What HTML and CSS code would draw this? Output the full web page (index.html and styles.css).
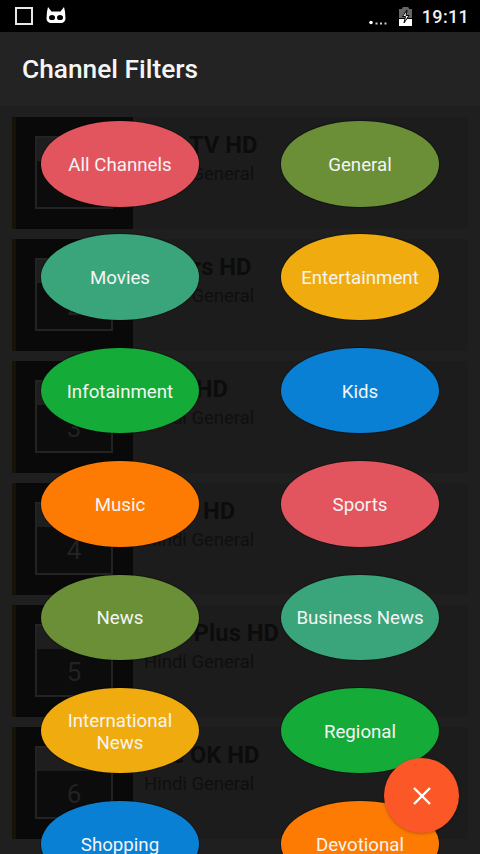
FILE: index.html
```html
<!DOCTYPE html>
<html lang="en">
<head>
<meta charset="utf-8">
<title>Channel Filters</title>
<link rel="stylesheet" href="styles.css">
</head>
<body>
<div class="screen">
  <header class="statusbar">
    <div class="status-left">
      <span class="square"></span>
      <svg class="mask" viewBox="0 0 20 17"><path d="M2 0l3.500 4.500h9L18 0l1 4.500 .500 7a4.500 4.500 0 0 1-4.500 4.500H5a4.500 4.500 0 0 1-4.500-4.500l.500-7z" fill="#fff"/><ellipse cx="6" cy="10.500" rx="3" ry="2.600" fill="#000"/><ellipse cx="14" cy="10.500" rx="3" ry="2.600" fill="#000"/></svg>
    </div>
    <div class="status-right">
      <svg class="signal" viewBox="0 0 20 6"><circle cx="2" cy="3.500" r="1.800" fill="#fff"/><rect x="6.500" y="3.500" width="2" height="2" fill="#ccc"/><rect x="11" y="3.500" width="2" height="2" fill="#ccc"/><rect x="15.500" y="3.500" width="2" height="2" fill="#ccc"/></svg>
      <svg class="battery" viewBox="0 0 13 19"><path d="M3 2V1.500A1.500 1.500 0 0 1 4.500 0h4A1.500 1.500 0 0 1 10 1.500V2h3v9H0V2z" fill="#666"/><path d="M0 12h13v7H0z" fill="#fff"/><path d="M8 3L3.500 9.500h3L5 16l5-7.500H7z" fill="#fff" stroke="#000" stroke-width="1"/></svg>
      <span class="clock">19:11</span>
    </div>
  </header>
  <div class="appbar"><h1 class="title">Channel Filters</h1></div>
  <main class="list">
    <article class="row"><div class="thumb"><div class="logo"><div class="logo-top"></div><div class="logo-num">1</div></div></div><div class="info"><div class="name">Zee TV HD</div><div class="genre">Hindi General</div></div></article>
    <article class="row"><div class="thumb"><div class="logo"><div class="logo-top"></div><div class="logo-num">2</div></div></div><div class="info"><div class="name">Colors HD</div><div class="genre">Hindi General</div></div></article>
    <article class="row"><div class="thumb"><div class="logo"><div class="logo-top"></div><div class="logo-num">3</div></div></div><div class="info"><div class="name">&amp;TV HD</div><div class="genre">Hindi General</div></div></article>
    <article class="row"><div class="thumb"><div class="logo"><div class="logo-top"></div><div class="logo-num">4</div></div></div><div class="info"><div class="name">Sony HD</div><div class="genre">Hindi General</div></div></article>
    <article class="row"><div class="thumb"><div class="logo"><div class="logo-top"></div><div class="logo-num">5</div></div></div><div class="info"><div class="name">Star Plus HD</div><div class="genre">Hindi General</div></div></article>
    <article class="row"><div class="thumb"><div class="logo"><div class="logo-top"></div><div class="logo-num">6</div></div></div><div class="info"><div class="name">Life OK HD</div><div class="genre">Hindi General</div></div></article>
  </main>
  <nav class="filters">
    <a class="pill red">All Channels</a>
    <a class="pill olive">General</a>
    <a class="pill teal">Movies</a>
    <a class="pill amber">Entertainment</a>
    <a class="pill green">Infotainment</a>
    <a class="pill blue">Kids</a>
    <a class="pill orange">Music</a>
    <a class="pill red">Sports</a>
    <a class="pill olive">News</a>
    <a class="pill teal">Business News</a>
    <a class="pill amber">International News</a>
    <a class="pill green">Regional</a>
    <a class="pill blue">Shopping</a>
    <a class="pill orange">Devotional</a>
  </nav>
  <button class="fab" aria-label="Close"><svg viewBox="0 0 20 20"><path d="M2 2l16 16M18 2L2 18" stroke="#fff" stroke-width="2.400" fill="none"/></svg></button>
</div>
</body>
</html>
```
FILE: styles.css
```css
* { box-sizing: border-box; }
html, body { margin: 0; padding: 0; height: 854px; overflow: hidden; background: #1d1d1d; }
.screen { position: relative; width: 480px; height: 854px; overflow: hidden; font-family: Roboto, "Liberation Sans", sans-serif; color: #fff; background: #1d1d1d; }

.statusbar { height: 32px; background: #000; display: flex; justify-content: space-between; align-items: center; padding: 0 11px 0 15px; }
.status-left { display: flex; align-items: center; gap: 13px; }
.square { width: 18px; height: 18px; border: 2px solid #e8e8e8; display: block; }
.mask { width: 20px; height: 17px; display: block; margin-top: -1px; }
.status-right { display: flex; align-items: center; }
.signal { width: 20px; height: 6px; margin: 11px 10px 0 0; display: block; }
.battery { width: 13px; height: 19px; display: block; margin-right: 10px; }
.clock { font-size: 18px; font-weight: 500; letter-spacing: 0.3px; color: #f0f0f0; }

.appbar { height: 74px; background: #232323; display: flex; align-items: center; padding: 0 0 0 22px; }
.title { margin: 0; font-size: 26.300px; font-weight: 500; color: #f5f5f5; }

.list { display: flex; flex-direction: column; gap: 10px; padding: 11px 12px 0 12px; background: #1f1f1f; height: 748px; }
.row { flex: 0 0 112px; display: flex; background: #1c1c1c; }
.thumb { width: 121px; padding: 19px 20px 0 19px; background: #090909; border-left: 4px solid #171208; }
.logo { width: 78px; height: 73px; border: 2px solid #232323; display: flex; flex-direction: column; background: #0c0c0c; }
.logo-top { height: 23px; background: #1e1e1e; }
.logo-num { flex: 1; text-align: center; font-size: 26px; line-height: 46px; color: #222; }
.info { padding: 13px 0 0 11px; }
.name { font-size: 23.700px; font-weight: 700; color: #0c0c0c; line-height: 30px; }
.genre { font-size: 18.500px; color: #0f0f0f; line-height: 26px; margin-top: 1px; }

.filters { position: absolute; left: 41px; top: 121px; width: 398px; display: grid; grid-template-columns: 158px 158px; column-gap: 82px; grid-auto-rows: 85.500px; row-gap: 27.900px; }
.pill { display: flex; align-items: center; justify-content: center; text-align: center; border-radius: 50%; font-size: 18.700px; line-height: 22px; color: #f4f4f4; padding: 2px 10px 0; box-shadow: 0 0 0 1px rgba(0,0,0,0.3); }
.red { background: #e2545e; }
.olive { background: #6a8f36; }
.teal { background: #3aa57a; }
.amber { background: #f0ab0e; }
.green { background: #14ab38; }
.blue { background: #0a80d4; }
.orange { background: #fd7b03; }

.fab { position: absolute; left: 384px; top: 758px; width: 75px; height: 75px; border: 0; border-radius: 50%; background: #fc5726; padding: 0; display: flex; align-items: center; justify-content: center; box-shadow: 0 1px 3px rgba(0,0,0,0.25); }
.fab svg { width: 20px; height: 20px; display: block; }
```
